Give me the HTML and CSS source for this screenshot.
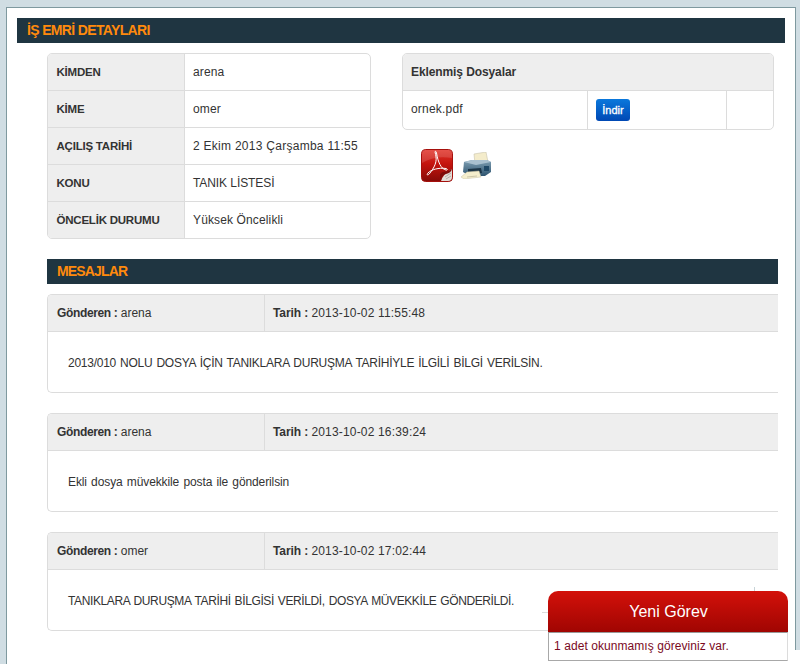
FILE: index.html
```html
<!DOCTYPE html>
<html lang="tr">
<head>
<meta charset="utf-8">
<title>İş Emri Detayları</title>
<link rel="stylesheet" href="styles.css">
</head>
<body>
<main class="panel">
  <h1 class="bar bar-main">İŞ EMRİ DETAYLARI</h1>
  <div class="top">
    <section class="box info">
      <div class="info-row"><b class="key">KİMDEN</b><span class="val">arena</span></div>
      <div class="info-row"><b class="key">KİME</b><span class="val">omer</span></div>
      <div class="info-row"><b class="key">AÇILIŞ TARİHİ</b><span class="val val-date">2 Ekim 2013 Çarşamba 11:55</span></div>
      <div class="info-row"><b class="key">KONU</b><span class="val val-caps">TANIK LİSTESİ</span></div>
      <div class="info-row"><b class="key">ÖNCELİK DURUMU</b><span class="val">Yüksek Öncelikli</span></div>
    </section>
    <div class="side">
      <section class="box files">
        <b class="files-head">Eklenmiş Dosyalar</b>
        <div class="files-row">
          <span class="f-name">ornek.pdf</span>
          <span class="f-action"><button class="btn" type="button">İndir</button></span>
          <span class="f-empty"></span>
        </div>
      </section>
      <div class="tools">
        <svg class="ic-pdf" width="32" height="33" viewBox="0 0 32 33">
          <defs>
            <linearGradient id="pr" x1="0" y1="0" x2="0" y2="1">
              <stop offset="0" stop-color="#e2362c"/><stop offset=".45" stop-color="#c4140e"/><stop offset="1" stop-color="#860a07"/>
            </linearGradient>
          </defs>
          <rect x=".5" y=".5" width="31" height="32" rx="4" fill="url(#pr)" stroke="#a5100c"/>
          <path d="M1 14 Q14 6 31 9 V1 H1Z" fill="#fff" opacity=".14"/>
          <path d="M14 3 C16 10 16 15 9 24 C7 27 5 26 7 24 C10 20.5 18 18.5 25 19.5 C27 20 26.5 21.5 25 21 C20 20 17 13 15.5 4 C15.3 2 13.8 2 14 3Z" fill="none" stroke="#fff" stroke-width="1"/>
          <path d="M31 20 V28 Q31 32 27 32 H20 Q22 25 31 20Z" fill="#e2dcd6"/>
          <path d="M20 32 Q20 26 25 25 Q30 24 31 20 Q27 23 22 23 Q17 24 20 32Z" fill="#7d0a08"/>
          <path d="M24 28 L30 24 M25 30 L30 27" stroke="#a8a09a" stroke-width=".8"/>
        </svg>
        <svg class="ic-print" width="31" height="27" viewBox="0 0 31 27">
          <defs>
            <linearGradient id="pb" x1="0" y1="0" x2="0" y2="1">
              <stop offset="0" stop-color="#7f9fb3"/><stop offset="1" stop-color="#2f5570"/>
            </linearGradient>
          </defs>
          <path d="M13 2 L25 0 L27 10 L14 12Z" fill="#f4eccb" stroke="#c9c4ac" stroke-width=".6"/>
          <path d="M3 10 L11 8 L26 8 L30 10 V20 L24 24 L9 24 L2 20Z" fill="url(#pb)"/>
          <path d="M3 10 L11 8 L26 8 L30 10 L15 13Z" fill="#a9c0cf"/>
          <rect x="23" y="14" width="5" height="5" fill="#1f4866"/>
          <path d="M7 17 L20 16 L21 21 L7 23Z" fill="#1c3547"/>
          <path d="M6 20 L18 19 L20 25 L3 27 L0 25Z" fill="#f5eecd" stroke="#c8c2a6" stroke-width=".5"/>
          <path d="M6 25 L16 24" stroke="#b9b39a" stroke-width=".7"/>
        </svg>
      </div>
    </div>
  </div>
  <section class="messages">
    <h2 class="bar bar-sub">MESAJLAR</h2>
    <article class="box msg">
      <header class="msg-head"><span class="from"><b>Gönderen :</b> arena</span><span class="date"><b>Tarih :</b> <span class="stamp">2013-10-02 11:55:48</span></span></header>
      <p class="msg-body msg-caps-a">2013/010 NOLU DOSYA İÇİN TANIKLARA DURUŞMA TARİHİYLE İLGİLİ BİLGİ VERİLSİN.</p>
    </article>
    <article class="box msg">
      <header class="msg-head"><span class="from"><b>Gönderen :</b> arena</span><span class="date"><b>Tarih :</b> <span class="stamp">2013-10-02 16:39:24</span></span></header>
      <p class="msg-body msg-lower">Ekli dosya müvekkile posta ile gönderilsin</p>
    </article>
    <article class="box msg">
      <header class="msg-head"><span class="from"><b>Gönderen :</b> omer</span><span class="date"><b>Tarih :</b> <span class="stamp">2013-10-02 17:02:44</span></span></header>
      <p class="msg-body msg-caps-b">TANIKLARA DURUŞMA TARİHİ BİLGİSİ VERİLDİ, DOSYA MÜVEKKİLE GÖNDERİLDİ.</p>
    </article>
  </section>
</main>
<div class="ghost"></div>
<aside class="toast">
  <div class="toast-head">Yeni Görev</div>
  <div class="toast-body">1 adet okunmamış göreviniz var.</div>
</aside>
</body>
</html>
```
FILE: styles.css
```css
* { box-sizing: border-box; }
html, body { margin: 0; height: 664px; overflow: hidden; }
body {
  background: #d0dde3;
  padding: 7px 4px 0 6px;
  font: 12px/1.4 "Liberation Sans", Arial, sans-serif;
  color: #333;
}
body::after {
  content: "";
  position: fixed;
  left: 795px;
  top: 650px;
  width: 5px;
  height: 14px;
  background: #fff;
}
.panel {
  background: #fff;
  border: 1px solid #7f999f;
  border-bottom: 0;
  height: 657px;
  padding: 10px 10px 0 10px;
}
.bar {
  margin: 0;
  height: 25px;
  background: #1f3541;
  color: #ff8a0c;
  font-size: 14px;
  font-weight: bold;
  line-height: 25px;
  padding-left: 10px;
}
.bar-main { letter-spacing: -.65px; }
.bar-sub { letter-spacing: -.85px; }
.top {
  display: flex;
  margin: 10px 11px 0 30px;
  gap: 31px;
}
.box {
  border: 1px solid #dcdcdc;
  border-radius: 5px;
  overflow: hidden;
}
.info { width: 324px; height: 186px; flex: none; }
.info-row { display: flex; height: 37px; line-height: 36px; border-top: 1px solid #dcdcdc; }
.info-row:first-child { border-top: 0; height: 36px; }
.key { width: 137px; padding-left: 8.5px; background: #eee; border-right: 1px solid #dcdcdc; font-size: 11.5px; letter-spacing: -.22px; }
.val { padding-left: 8px; letter-spacing: .13px; }
.val-date { letter-spacing: .27px; }
.val-caps { letter-spacing: -.08px; }
.side { flex: 1; }
.files { height: 77px; }
.files-head { display: block; height: 37px; line-height: 36px; padding-left: 8px; background: #eee; border-bottom: 1px solid #dcdcdc; letter-spacing: -.1px; }
.files-row { display: flex; height: 39px; line-height: 36px; }
.f-name { width: 185px; padding-left: 8px; border-right: 1px solid #dcdcdc; letter-spacing: .2px; }
.f-action { width: 139px; padding: 8px 0 0 8px; border-right: 1px solid #dcdcdc; }
.btn {
  display: block;
  width: 34px;
  height: 22px;
  padding: 0;
  border: 0;
  border-radius: 3px;
  background: linear-gradient(#0a78dc, #0048b4);
  color: #fff;
  font: 11px/22px "Liberation Sans", Arial, sans-serif;
  -webkit-text-stroke: .3px #fff;
}
.tools { display: flex; align-items: center; gap: 8px; margin: 19px 0 0 19px; }
.messages { margin: 20px 7px 0 30px; }
.msg { margin-top: 10px; height: 99px; border-right: 0; border-radius: 5px 0 0 5px; }
.msg + .msg { margin-top: 20px; }
.msg-head { display: flex; height: 37px; line-height: 36px; background: #eee; border-bottom: 1px solid #dcdcdc; }
.from { width: 217px; padding-left: 9px; border-right: 1px solid #dcdcdc; }
.from b { letter-spacing: -.36px; }
.date { padding-left: 8px; }
.date b { letter-spacing: -.1px; }
.stamp { letter-spacing: .17px; }
.msg-body { margin: 0; padding: 0 0 0 20px; line-height: 62px; word-spacing: 1px; }
.msg-caps-a { letter-spacing: -.26px; }
.msg-caps-b { letter-spacing: -.39px; }
.msg-lower { letter-spacing: -.11px; }
.ghost {
  position: fixed;
  left: 542px;
  top: 587px;
  width: 213px;
  height: 26px;
  border-right: 1px solid #c8d4d8;
  border-bottom: 1px solid #dcdcdc;
}
.toast {
  position: fixed;
  left: 548px;
  top: 591px;
  width: 240px;
  height: 70px;
}
.toast-head {
  height: 41px;
  border-radius: 10px 10px 0 0;
  background: linear-gradient(#d3110a, #a00502);
  color: #fff;
  font-size: 16px;
  line-height: 41px;
  padding-left: 1px;
  text-align: center;
}
.toast-body {
  height: 29px;
  padding-left: 5px;
  background: #fff;
  border: 1px solid #a8a8a8;
  border-top-color: #999;
  border-right-color: #dcdcdc;
  color: #7a0a1e;
  line-height: 27px;
  letter-spacing: .07px;
}
```
